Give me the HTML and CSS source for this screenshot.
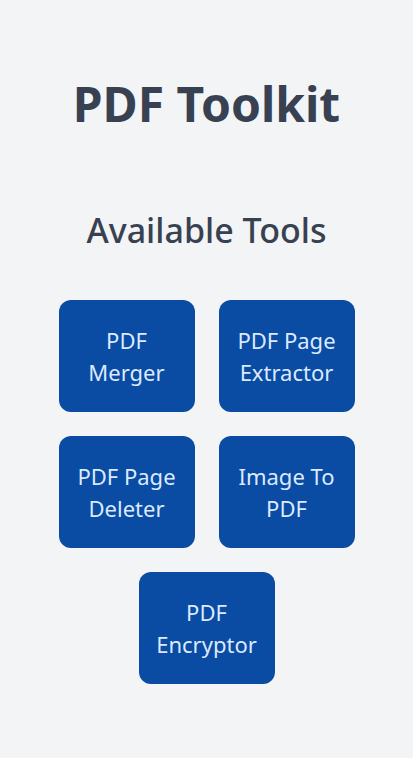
FILE: index.html
```html
<!DOCTYPE html>
<html lang="en">
<head>
<meta charset="utf-8">
<title>PDF Toolkit</title>
<link rel="stylesheet" href="styles.css">
</head>
<body>
<main class="page">
  <h1 class="title">PDF Toolkit</h1>
  <h2 class="subtitle">Available Tools</h2>
  <div class="tools">
    <a class="tool" href="#">PDF Merger</a>
    <a class="tool" href="#">PDF Page Extractor</a>
    <a class="tool" href="#">PDF Page Deleter</a>
    <a class="tool" href="#">Image To PDF</a>
    <a class="tool" href="#">PDF Encryptor</a>
  </div>
</main>
</body>
</html>
```
FILE: styles.css
```css
html, body {
  margin: 0;
  padding: 0;
}
body {
  background: #f3f4f6;
  color: #374151;
  font-family: "Noto Sans", "Open Sans", sans-serif;
  min-height: 100vh;
}
.page {
  display: flex;
  flex-direction: column;
  align-items: center;
  padding-top: 80px;
}
.title {
  margin: 0;
  font-size: 48px;
  line-height: 48px;
  font-weight: 700;
}
.subtitle {
  margin: 82px 0 0;
  font-size: 34px;
  line-height: 40px;
  font-weight: 500;
}
.tools {
  margin-top: 50px;
  width: 296px;
  display: flex;
  flex-wrap: wrap;
  justify-content: center;
  gap: 24px;
}
.tool {
  box-sizing: border-box;
  width: 136px;
  height: 112px;
  padding: 24px 12px;
  border-radius: 12px;
  background: #0a4ba4;
  color: #dbeafe;
  text-decoration: none;
  font-size: 22px;
  line-height: 32px;
  text-align: center;
  display: flex;
  align-items: center;
  justify-content: center;
}
```
